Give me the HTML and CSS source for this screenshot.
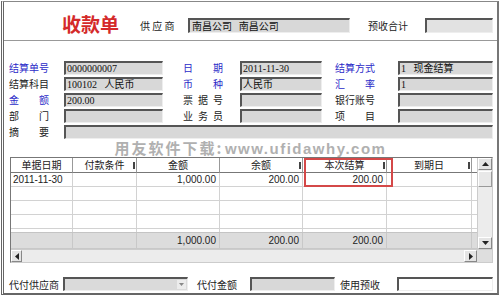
FILE: index.html
```html
<!DOCTYPE html>
<html lang="zh-CN">
<head>
  <meta charset="UTF-8" />
  <title>收款单</title>
  <link rel="stylesheet" href="styles.css">
</head>
<body>
  <div class="bill">
    <div class="head">
      <h1 class="title">收款单</h1>
      <span class="head-lbl">供 应 商</span>
      <div class="box vendor">南昌公司&nbsp;&nbsp;&nbsp;南昌公司</div>
      <span class="head-lbl2">预收合计</span>
      <div class="box sum"></div>
    </div>

    <div class="fields">
      <label class="lbl blue">结算单号</label>
      <div class="box">0000000007</div>
      <label class="lbl mid blue">日期</label>
      <div class="box">2011-11-30</div>
      <label class="lbl right blue">结算方式</label>
      <div class="box">1&nbsp;&nbsp;&nbsp;现金结算</div>

      <label class="lbl">结算科目</label>
      <div class="box">100102&nbsp;&nbsp;&nbsp;人民币</div>
      <label class="lbl mid blue">币种</label>
      <div class="box">人民币</div>
      <label class="lbl right blue">汇率</label>
      <div class="box">1</div>

      <label class="lbl blue">金额</label>
      <div class="box">200.00</div>
      <label class="lbl mid">票据号</label>
      <div class="box"></div>
      <label class="lbl right">银行账号</label>
      <div class="box"></div>

      <label class="lbl">部门</label>
      <div class="box"></div>
      <label class="lbl mid">业务员</label>
      <div class="box"></div>
      <label class="lbl right">项目</label>
      <div class="box"></div>

      <label class="lbl">摘要</label>
      <div class="box wide"></div>
    </div>

    <div class="watermark"><span class="wm-cn">用友软件下载</span>: <span class="wm-en">www.ufidawhy.com</span></div>

    <div class="grid-wrap">
      <div class="grid-main">
        <div class="table">
          <div class="row hdr">
            <div>单据日期</div>
            <div>付款条件<i class="mark"></i></div>
            <div>金额</div>
            <div>余额<i class="mark"></i></div>
            <div>本次结算<i class="mark"></i></div>
            <div>到期日<i class="mark"></i></div>
            <div></div>
          </div>
          <div class="row">
            <div class="txt">2011-11-30</div>
            <div></div>
            <div class="num">1,000.00</div>
            <div class="num">200.00</div>
            <div class="num">200.00</div>
            <div></div>
            <div></div>
          </div>
          <div class="row"><div></div><div></div><div></div><div></div><div></div><div></div><div></div></div>
          <div class="row"><div></div><div></div><div></div><div></div><div></div><div></div><div></div></div>
          <div class="row"><div></div><div></div><div></div><div></div><div></div><div></div><div></div></div>
          <div class="row part"><div></div><div></div><div></div><div></div><div></div><div></div><div></div></div>
          <div class="row total">
            <div></div>
            <div></div>
            <div class="num">1,000.00</div>
            <div class="num">200.00</div>
            <div class="num">200.00</div>
            <div></div>
            <div></div>
          </div>
        </div>
        <div class="vscroll">
          <div class="sbtn up"><svg width="7" height="4" viewBox="0 0 7 4"><path d="M0 4 L3.5 0 L7 4 Z" fill="#222"/></svg></div>
          <div class="thumb"></div>
          <div class="track"></div>
          <div class="sbtn down"><svg width="7" height="4" viewBox="0 0 7 4"><path d="M0 0 L3.5 4 L7 0 Z" fill="#222"/></svg></div>
        </div>
      </div>
      <div class="hscroll">
        <div class="sbtn left"><svg width="4" height="7" viewBox="0 0 4 7"><path d="M4 0 L0 3.5 L4 7 Z" fill="#222"/></svg></div>
        <div class="track"></div>
        <div class="sbtn right"><svg width="4" height="7" viewBox="0 0 4 7"><path d="M0 0 L4 3.5 L0 7 Z" fill="#222"/></svg></div>
        <div class="corner"></div>
      </div>
      <div class="focus-box"></div>
    </div>

    <div class="foot">
      <span class="foot-lbl">代付供应商</span>
      <div class="box combo"><span class="drop"><svg width="5" height="3" viewBox="0 0 5 3"><path d="M0 0 L2.5 3 L5 0 Z" fill="#888"/></svg></span></div>
      <span class="foot-lbl2">代付金额</span>
      <div class="box pay"></div>
      <span class="foot-lbl3">使用预收</span>
      <div class="box use"></div>
    </div>
  </div>
</body>
</html>
```

FILE: styles.css
```css
body {
  margin: 0;
  background: #fff;
  font-family: "Noto Sans CJK SC", sans-serif;
  font-size: 10px;
  color: #222;
}
.bill {
  box-sizing: border-box;
  width: 498px;
  height: 294px;
  margin: 1px 0 0 1px;
  border-top: 1px solid #888;
  border-left: 3px double #666;
  border-right: 2px solid #777;
  border-bottom: 2px solid #666;
}
.box {
  box-sizing: border-box;
  height: 14px;
  background: #d8d8d8;
  border-top: 2px solid #555;
  border-left: 2px solid #555;
  border-right: 1px solid #eee;
  border-bottom: 1px solid #eee;
  padding-left: 1px;
  font-family: "Liberation Serif", "Noto Sans CJK SC", serif;
  font-size: 10px;
  line-height: 11px;
  color: #111;
  white-space: nowrap;
  overflow: hidden;
}

/* header */
.head {
  box-sizing: border-box;
  height: 39px;
  padding-top: 8px;
  display: flex;
  align-items: center;
  border-bottom: 1px solid #999;
}
.title {
  margin: -2px 0 0 58px;
  font-size: 19px;
  font-weight: bold;
  color: #d42a2a;
  line-height: 22px;
}
.head-lbl {
  margin-left: 21px;
  width: 30px;
  white-space: nowrap;
}
.vendor {
  margin-left: 18px;
  width: 162px;
  height: 15px;
  padding-left: 2px;
  line-height: 12px;
  font-family: "Noto Sans CJK SC", sans-serif;
}
.head-lbl2 {
  margin-left: 18px;
  width: 40px;
}
.sum {
  margin-left: 17px;
  width: 68px;
  height: 15px;
  background: #e2e2e2;
}

/* fields */
.fields {
  display: grid;
  grid-template-columns: 55px 99px 77px 82px 76px 95px;
  grid-auto-rows: 14px;
  row-gap: 2px;
  padding: 20px 0 0 5px;
}
.lbl {
  width: 40px;
  line-height: 14px;
  white-space: nowrap;
  text-align: justify;
  text-align-last: justify;
}
.lbl.mid {
  margin-left: 20px;
}
.lbl.right {
  margin-left: 13px;
}
.blue {
  color: #2b2bc8;
}
.wide {
  grid-column: 2 / 7;
}

/* watermark */
.watermark {
  height: 18px;
  line-height: 18px;
  text-align: center;
  font-size: 15px;
  font-weight: bold;
  color: #b0b0b0;
}
.wm-cn {
  letter-spacing: 2px;
}
.wm-en {
  font-family: "Liberation Sans", sans-serif;
  letter-spacing: 1.5px;
}

/* grid */
.grid-wrap {
  position: relative;
  box-sizing: border-box;
  width: 483px;
  margin-left: 6px;
  border: 1px solid;
  border-color: #777 #ccc #ccc #777;
}
.grid-main {
  display: flex;
}
.table {
  flex: 1;
}
.row {
  display: grid;
  grid-template-columns: 62px 64px 83px 83px 84px 85px 5px;
  height: 14px;
}
.row > div {
  box-sizing: border-box;
  border-right: 1px solid #d2d2d2;
  border-bottom: 1px solid #d2d2d2;
  line-height: 13px;
  white-space: nowrap;
}
.row > div:last-child {
  border-right: none;
}
.hdr {
  height: 15px;
}
.hdr > div {
  position: relative;
  text-align: center;
  line-height: 14px;
  border-right-color: #999;
  border-bottom-color: #777;
}
.mark {
  position: absolute;
  right: 1px;
  top: 4px;
  width: 2px;
  height: 7px;
  background: #444;
}
.part {
  height: 3px;
}
.part > div {
  border-bottom: none;
}
.total {
  height: 16px;
  background: #dcdcdc;
  border-top: 1px solid #c4c4c4;
}
.total > div {
  line-height: 15px;
  border-color: #c8c8c8;
}
.txt {
  padding-left: 2px;
  font-family: "Liberation Sans", sans-serif;
}
.num {
  text-align: right;
  padding-right: 3px;
  font-family: "Liberation Sans", sans-serif;
}
.vscroll {
  width: 15px;
  display: flex;
  flex-direction: column;
  background: #ececec;
  border-left: 1px solid #ccc;
  box-sizing: border-box;
}
.sbtn {
  box-sizing: border-box;
  display: flex;
  align-items: center;
  justify-content: center;
  background: #e4e4e4;
  border: 1px solid;
  border-color: #fff #888 #888 #fff;
}
.vscroll .sbtn {
  height: 12px;
}
.thumb {
  height: 14px;
  margin-top: 1px;
  background: #e8e8e8;
  border: 1px solid;
  border-color: #fff #999 #999 #fff;
}
.track {
  flex: 1;
}
.hscroll {
  display: flex;
  height: 13px;
  background: #ececec;
  border-top: 1px solid #ccc;
  box-sizing: border-box;
}
.hscroll .sbtn.left {
  width: 11px;
}
.hscroll .sbtn.right {
  width: 13px;
}
.corner {
  width: 15px;
  background: #dedede;
}
.focus-box {
  position: absolute;
  left: 293px;
  top: 0;
  width: 89px;
  height: 29px;
  box-sizing: border-box;
  border: 2px solid #d44848;
}

/* footer */
.foot {
  display: flex;
  align-items: center;
  height: 14px;
  margin-top: 14px;
  padding-left: 5px;
}
.foot-lbl {
  width: 50px;
  white-space: nowrap;
}
.combo {
  position: relative;
  margin-left: 4px;
  width: 125px;
  background: #dadada;
}
.drop {
  position: absolute;
  right: 1px;
  top: 1px;
  width: 9px;
  height: 9px;
  display: flex;
  align-items: center;
  justify-content: center;
  background: #ececec;
}
.foot-lbl2 {
  margin-left: 9px;
  width: 40px;
}
.pay {
  margin-left: 13px;
  width: 85px;
}
.foot-lbl3 {
  margin-left: 5px;
  width: 40px;
}
.use {
  margin-left: 17px;
  width: 96px;
  background: #fff;
}
```
